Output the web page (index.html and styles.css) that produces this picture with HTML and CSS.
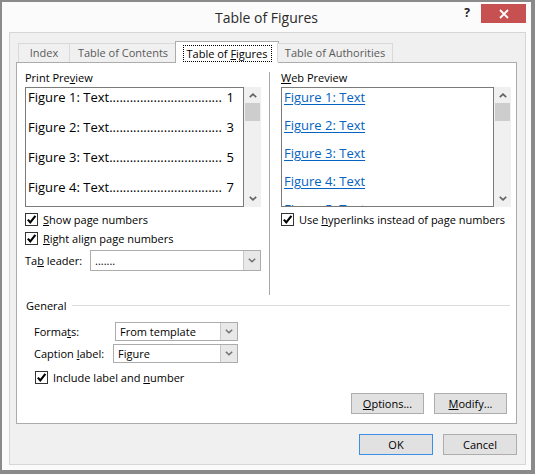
FILE: index.html
```html
<!DOCTYPE html>
<html>
<head>
<meta charset="utf-8">
<link rel="stylesheet" href="styles.css">
</head>
<body>
<div class="window">
  <div class="titlebar">
    <div class="tb-side"></div>
    <div class="title">Table of Figures</div>
    <div class="tb-side tb-right">
      <div class="help">?</div>
      <div class="close">
        <svg width="10" height="10" viewBox="0 0 10 10"><path d="M1 1 L9 9 M9 1 L1 9" stroke="#fff" stroke-width="1.8" fill="none"/></svg>
      </div>
    </div>
  </div>
  <div class="body">
    <div class="tabs">
      <div class="tab tab-index">Index</div>
      <div class="tab tab-toc">Table of Contents</div>
      <div class="tab tab-tof active"><span class="focus">Table of <u>F</u>igures</span></div>
      <div class="tab tab-toa">Table of Authorities</div>
    </div>
    <div class="panel">
      <div class="top">
        <div class="col col-left">
          <div class="label">Print Pre<u>v</u>iew</div>
          <div class="listwrap">
            <div class="listbox print">
              <div class="pitem"><span>Figure 1: Text</span><span class="leader">.................................</span><span class="num">1</span></div>
              <div class="pitem"><span>Figure 2: Text</span><span class="leader">.................................</span><span class="num">3</span></div>
              <div class="pitem"><span>Figure 3: Text</span><span class="leader">.................................</span><span class="num">5</span></div>
              <div class="pitem"><span>Figure 4: Text</span><span class="leader">.................................</span><span class="num">7</span></div>
            </div>
            <div class="scrollbar">
              <svg class="sb-arrow" width="8" height="5" viewBox="0 0 8 5"><path d="M0.8 4.2 L4 1.2 L7.2 4.2" stroke="#606060" stroke-width="1.6" fill="none"/></svg>
              <div class="thumb"></div>
              <div class="sb-fill"></div>
              <svg class="sb-arrow" width="8" height="5" viewBox="0 0 8 5"><path d="M0.8 0.8 L4 3.8 L7.2 0.8" stroke="#606060" stroke-width="1.6" fill="none"/></svg>
            </div>
          </div>
          <div class="checkrow first">
            <span class="cb"><svg width="11" height="11" viewBox="0 0 11 11"><path d="M1.8 5.6 L4.3 8.3 L9.4 1.9" stroke="#000" stroke-width="2.1" fill="none"/></svg></span>
            <span><u>S</u>how page numbers</span>
          </div>
          <div class="checkrow">
            <span class="cb"><svg width="11" height="11" viewBox="0 0 11 11"><path d="M1.8 5.6 L4.3 8.3 L9.4 1.9" stroke="#000" stroke-width="2.1" fill="none"/></svg></span>
            <span><u>R</u>ight align page numbers</span>
          </div>
          <div class="fieldrow leader-row">
            <span class="flabel w-leader">Ta<u>b</u> leader:</span>
            <div class="combo c-leader">
              <span class="ctext">.......</span>
              <span class="cbtn"><svg width="8" height="5" viewBox="0 0 8 5"><path d="M0.8 0.8 L4 3.8 L7.2 0.8" stroke="#707070" stroke-width="1.5" fill="none"/></svg></span>
            </div>
          </div>
        </div>
        <div class="sep"></div>
        <div class="col col-right">
          <div class="label"><u>W</u>eb Preview</div>
          <div class="listwrap">
            <div class="listbox web">
              <div class="witem"><span class="link">Figure 1: Text</span></div>
              <div class="witem"><span class="link">Figure 2: Text</span></div>
              <div class="witem"><span class="link">Figure 3: Text</span></div>
              <div class="witem"><span class="link">Figure 4: Text</span></div>
              <div class="witem"><span class="link">Figure 5: Text</span></div>
            </div>
            <div class="scrollbar">
              <svg class="sb-arrow" width="8" height="5" viewBox="0 0 8 5"><path d="M0.8 4.2 L4 1.2 L7.2 4.2" stroke="#606060" stroke-width="1.6" fill="none"/></svg>
              <div class="thumb"></div>
              <div class="sb-fill"></div>
              <svg class="sb-arrow" width="8" height="5" viewBox="0 0 8 5"><path d="M0.8 0.8 L4 3.8 L7.2 0.8" stroke="#606060" stroke-width="1.6" fill="none"/></svg>
            </div>
          </div>
          <div class="checkrow first">
            <span class="cb"><svg width="11" height="11" viewBox="0 0 11 11"><path d="M1.8 5.6 L4.3 8.3 L9.4 1.9" stroke="#000" stroke-width="2.1" fill="none"/></svg></span>
            <span>Use <u>h</u>yperlinks instead of page numbers</span>
          </div>
        </div>
      </div>
      <div class="general">
        <span>General</span>
        <span class="gline"></span>
      </div>
      <div class="fieldrow formats-row">
        <span class="flabel w-formats">Forma<u>t</u>s:</span>
        <div class="combo c-formats">
          <span class="ctext">From template</span>
          <span class="cbtn"><svg width="8" height="5" viewBox="0 0 8 5"><path d="M0.8 0.8 L4 3.8 L7.2 0.8" stroke="#707070" stroke-width="1.5" fill="none"/></svg></span>
        </div>
      </div>
      <div class="fieldrow caption-row">
        <span class="flabel w-caption">Caption <u>l</u>abel:</span>
        <div class="combo c-caption">
          <span class="ctext">Figure</span>
          <span class="cbtn"><svg width="8" height="5" viewBox="0 0 8 5"><path d="M0.8 0.8 L4 3.8 L7.2 0.8" stroke="#707070" stroke-width="1.5" fill="none"/></svg></span>
        </div>
      </div>
      <div class="checkrow include-row">
        <span class="cb"><svg width="11" height="11" viewBox="0 0 11 11"><path d="M1.8 5.6 L4.3 8.3 L9.4 1.9" stroke="#000" stroke-width="2.1" fill="none"/></svg></span>
        <span>Include label and <u>n</u>umber</span>
      </div>
      <div class="panel-buttons">
        <div class="btn"><u>O</u>ptions...</div>
        <div class="btn"><u>M</u>odify...</div>
      </div>
    </div>
    <div class="dlg-buttons">
      <div class="btn btn-ok">OK</div>
      <div class="btn">Cancel</div>
    </div>
  </div>
</div>
</body>
</html>
```

FILE: styles.css
```css
* { box-sizing: border-box; }
html, body { margin: 0; padding: 0; }
body {
  width: 535px;
  height: 474px;
  overflow: hidden;
  font-family: "Open Sans", "Noto Sans", sans-serif;
  font-size: 11px;
  color: #000;
  background: #fff;
}
u { text-decoration: underline; text-underline-offset: 1px; }

.window {
  width: 535px;
  height: 474px;
  background: #fbfbfb;
  border-style: solid;
  border-color: #8a8a8a;
  border-width: 2px 4px 4px 2px;
  display: flex;
  flex-direction: column;
}

.titlebar {
  height: 30px;
  flex: none;
  display: grid;
  grid-template-columns: 1fr auto 1fr;
}
.title {
  font-size: 14px;
  color: #2b2b2b;
  line-height: 30px;
  padding-top: 1px;
}
.tb-right {
  display: flex;
  justify-content: flex-end;
  align-items: flex-start;
  padding-right: 5px;
}
.help {
  font-weight: bold;
  font-size: 12px;
  color: #222;
  margin-top: 3px;
  margin-right: 11px;
  line-height: 16px;
}
.close {
  width: 45px;
  height: 19px;
  margin-top: 2px;
  background: #c75050;
  display: flex;
  align-items: center;
  justify-content: center;
}

.body {
  flex: none;
  height: 433px;
  margin: 0 5px 0 7px;
  background: #f0f0f0;
  border: 1px solid #d6d6d6;
  padding: 8px 8px 0 6px;
  display: flex;
  flex-direction: column;
}

.tabs {
  display: flex;
  align-items: flex-end;
  height: 21px;
  padding-left: 2px;
  position: relative;
  z-index: 1;
}
.tab {
  height: 19px;
  border: 1px solid #d9d9d9;
  border-bottom: none;
  background: #f0f0f0;
  color: #5a5a5a;
  text-align: center;
  line-height: 18px;
  margin-left: -1px;
}
.tab:first-child { margin-left: 0; }
.tab-index { width: 52px; }
.tab-toc { width: 108px; }
.tab-tof { width: 104px; }
.tab-toa { width: 116px; }
.tab.active {
  height: 22px;
  margin-bottom: -1px;
  background: #fff;
  border-color: #acacac;
  color: #000;
  padding-top: 3px;
  margin-left: -2px;
  margin-right: -1px;
  line-height: 14px;
}
.focus {
  display: inline-block;
  border: 1px dotted #000;
  padding: 0 3px;
  height: 17px;
  line-height: 15px;
}

.panel {
  height: 362px;
  flex: none;
  background: #fff;
  border: 1px solid #acacac;
  display: flex;
  flex-direction: column;
}

.top {
  display: flex;
  height: 232px;
  flex: none;
}
.col-left { margin-left: 8px; width: 236px; }
.sep { width: 1px; background: #a8a8a8; margin: 9px 11px 0 8px; }
.col-right { width: 230px; }

.label { height: 16px; line-height: 16px; margin-top: 7px; }
.listwrap { display: flex; height: 120px; margin-top: 1px; }
.listbox {
  border: 1px solid #7a7a7a;
  height: 120px;
  overflow: hidden;
  font-size: 13px;
}
.print { width: 219px; padding: 0 9px 0 2px; }
.web { width: 213px; padding: 0 0 0 2px; }

.pitem {
  display: flex;
  height: 18px;
  line-height: 18px;
  margin-bottom: 12px;
  white-space: nowrap;
}
.num { margin-left: auto; padding-left: 3px; }

.witem {
  height: 18px;
  line-height: 18px;
  margin-bottom: 10px;
  white-space: nowrap;
}
.link { color: #0563c1; text-decoration: underline; text-underline-offset: 2px; }

.scrollbar {
  width: 17px;
  height: 120px;
  background: #f0f0f0;
  display: flex;
  flex-direction: column;
  align-items: center;
}
.sb-arrow { flex: none; margin: 6px 0 5px; }
.scrollbar .sb-arrow:last-child { margin: 5px 0 6px; }
.thumb { width: 15px; height: 18px; background: #cdcdcd; flex: none; }
.sb-fill { flex: 1; }

.checkrow {
  display: flex;
  align-items: center;
  height: 19px;
  white-space: nowrap;
}
.checkrow.first { margin-top: 3px; }
.cb {
  width: 13px;
  height: 13px;
  border: 1px solid #333;
  background: #fff;
  margin-right: 5px;
  display: flex;
  align-items: center;
  justify-content: center;
  flex: none;
}

.fieldrow { display: flex; align-items: center; white-space: nowrap; }
.leader-row { margin-top: 2px; height: 21px; }
.flabel { flex: none; }
.w-leader { width: 65px; }
.combo {
  display: flex;
  border: 1px solid #acacac;
  background: #fff;
  height: 100%;
}
.c-leader { width: 171px; }
.ctext { flex: 1; padding-left: 4px; display: flex; align-items: center; }
.cbtn {
  width: 17px;
  background: #e8e8e8;
  border-left: 1px solid #c8c8c8;
  display: flex;
  align-items: center;
  justify-content: center;
  flex: none;
}

.general {
  display: flex;
  align-items: center;
  height: 16px;
  margin: 2px 6px 0 9px;
}
.gline { flex: 1; height: 1px; background: #dcdcdc; margin-left: 6px; }

.formats-row { margin: 9px 0 0 17px; height: 19px; }
.w-formats { width: 81px; }
.c-formats { width: 123px; }
.caption-row { margin: 3px 0 0 17px; height: 19px; }
.w-caption { width: 79px; }
.c-caption { width: 125px; }

.include-row { margin: 5px 0 0 18px; }

.panel-buttons {
  display: flex;
  justify-content: flex-end;
  gap: 10px;
  margin: 6px 9px 0 0;
}
.btn {
  width: 73px;
  height: 21px;
  background: #e1e1e1;
  border: 1px solid #adadad;
  display: flex;
  align-items: center;
  justify-content: center;
  white-space: nowrap;
}
.dlg-buttons {
  display: flex;
  justify-content: flex-end;
  gap: 10px;
  margin: 10px 0 0 0;
  padding-right: 0;
}
.dlg-buttons .btn { width: 74px; }
.btn-ok { border-color: #3c8fe6; }
```
